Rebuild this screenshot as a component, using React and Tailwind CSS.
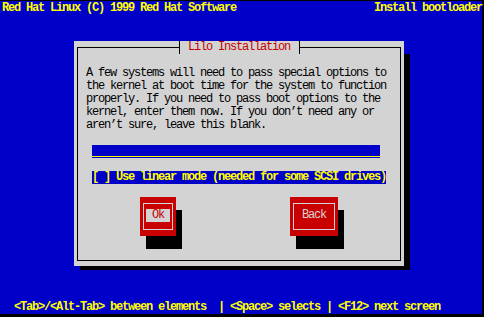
const BLUE = 'bg-[#0000c8]'

const helpText = [
  'A few systems will need to pass special options to',
  'the kernel at boot time for the system to function',
  'properly. If you need to pass boot options to the',
  "kernel, enter them now. If you don\u2019t need any or",
  "aren\u2019t sure, leave this blank.",
]

function Button({ label, width, focused }) {
  return (
    <div className={`${width} h-[39px] bg-[#c80000] pt-[6px] px-[3px] shadow-[6px_13px_0_0_#000]`}>
      <div className="h-[27px] border border-[#d3d3d3] pt-[5px]">
        {focused ? (
          <div className="ml-[2px] w-[24px] h-[13px] bg-[#d3d3d3] text-[#c80000] text-center">{label}</div>
        ) : (
          <div className="h-[13px] text-[#d3d3d3] text-center">{label}</div>
        )}
      </div>
    </div>
  )
}

export default function App() {
  return (
    <div className="w-[484px] h-[317px] bg-black pt-px font-['Liberation_Mono',monospace] text-[12px] leading-[13px] tracking-[-1.2px] whitespace-pre">
      <div className={`w-[482px] h-[313px] ${BLUE} pt-px pl-[2px] flex flex-col`}>
        <header className="w-[480px] h-[13px] flex justify-between text-[#ffff00] font-bold">
          <span>Red Hat Linux (C) 1999 Red Hat Software</span>
          <span>Install bootloader</span>
        </header>

        {/* dialog + its shadow */}
        <div className="mt-[26px] ml-[72px] flex flex-col">
          <div className="flex">
            <div className="w-[330px] bg-[#d3d3d3] pt-[6px] px-[3px] pb-[5px]">
              <div className="border border-black flex flex-col pb-[24px]">
                <div className="-mt-[7px] ml-[101px] w-[121px] h-[13px] bg-[#d3d3d3] border-x border-black pl-[8px] text-[#c80000]">
                  Lilo Installation
                </div>

                <div className="mt-[13px] pl-[8px] text-black">
                  {helpText.map((line) => (
                    <div key={line} className="h-[13px]">{line}</div>
                  ))}
                </div>

                <div className={`mt-[13px] ml-[14px] w-[288px] h-[13px] ${BLUE}`}>
                  <div className="mt-[11px] h-px bg-[#ffff00]" />
                </div>

                <div className={`mt-[13px] ml-[14px] self-start h-[13px] ${BLUE} text-[#ffff00] font-bold`}>
                  [ ] Use linear mode (needed for some SCSI drives)
                </div>

                <div className="mt-[13px] flex">
                  <div className="ml-[62px]">
                    <Button label="Ok" width="w-[36px]" focused />
                  </div>
                  <div className="ml-[114px]">
                    <Button label="Back" width="w-[48px]" />
                  </div>
                </div>
              </div>
            </div>
            <div className="w-[6px] mt-[13px] bg-black" />
          </div>
          <div className="ml-[6px] w-[330px] h-[4px] bg-black" />
        </div>

        <footer className="mt-auto h-[13px] pl-[12px] text-[#ffff00] font-bold">
          {'<Tab>/<Alt-Tab> between elements  | <Space> selects | <F12> next screen'}
        </footer>
      </div>
    </div>
  )
}
